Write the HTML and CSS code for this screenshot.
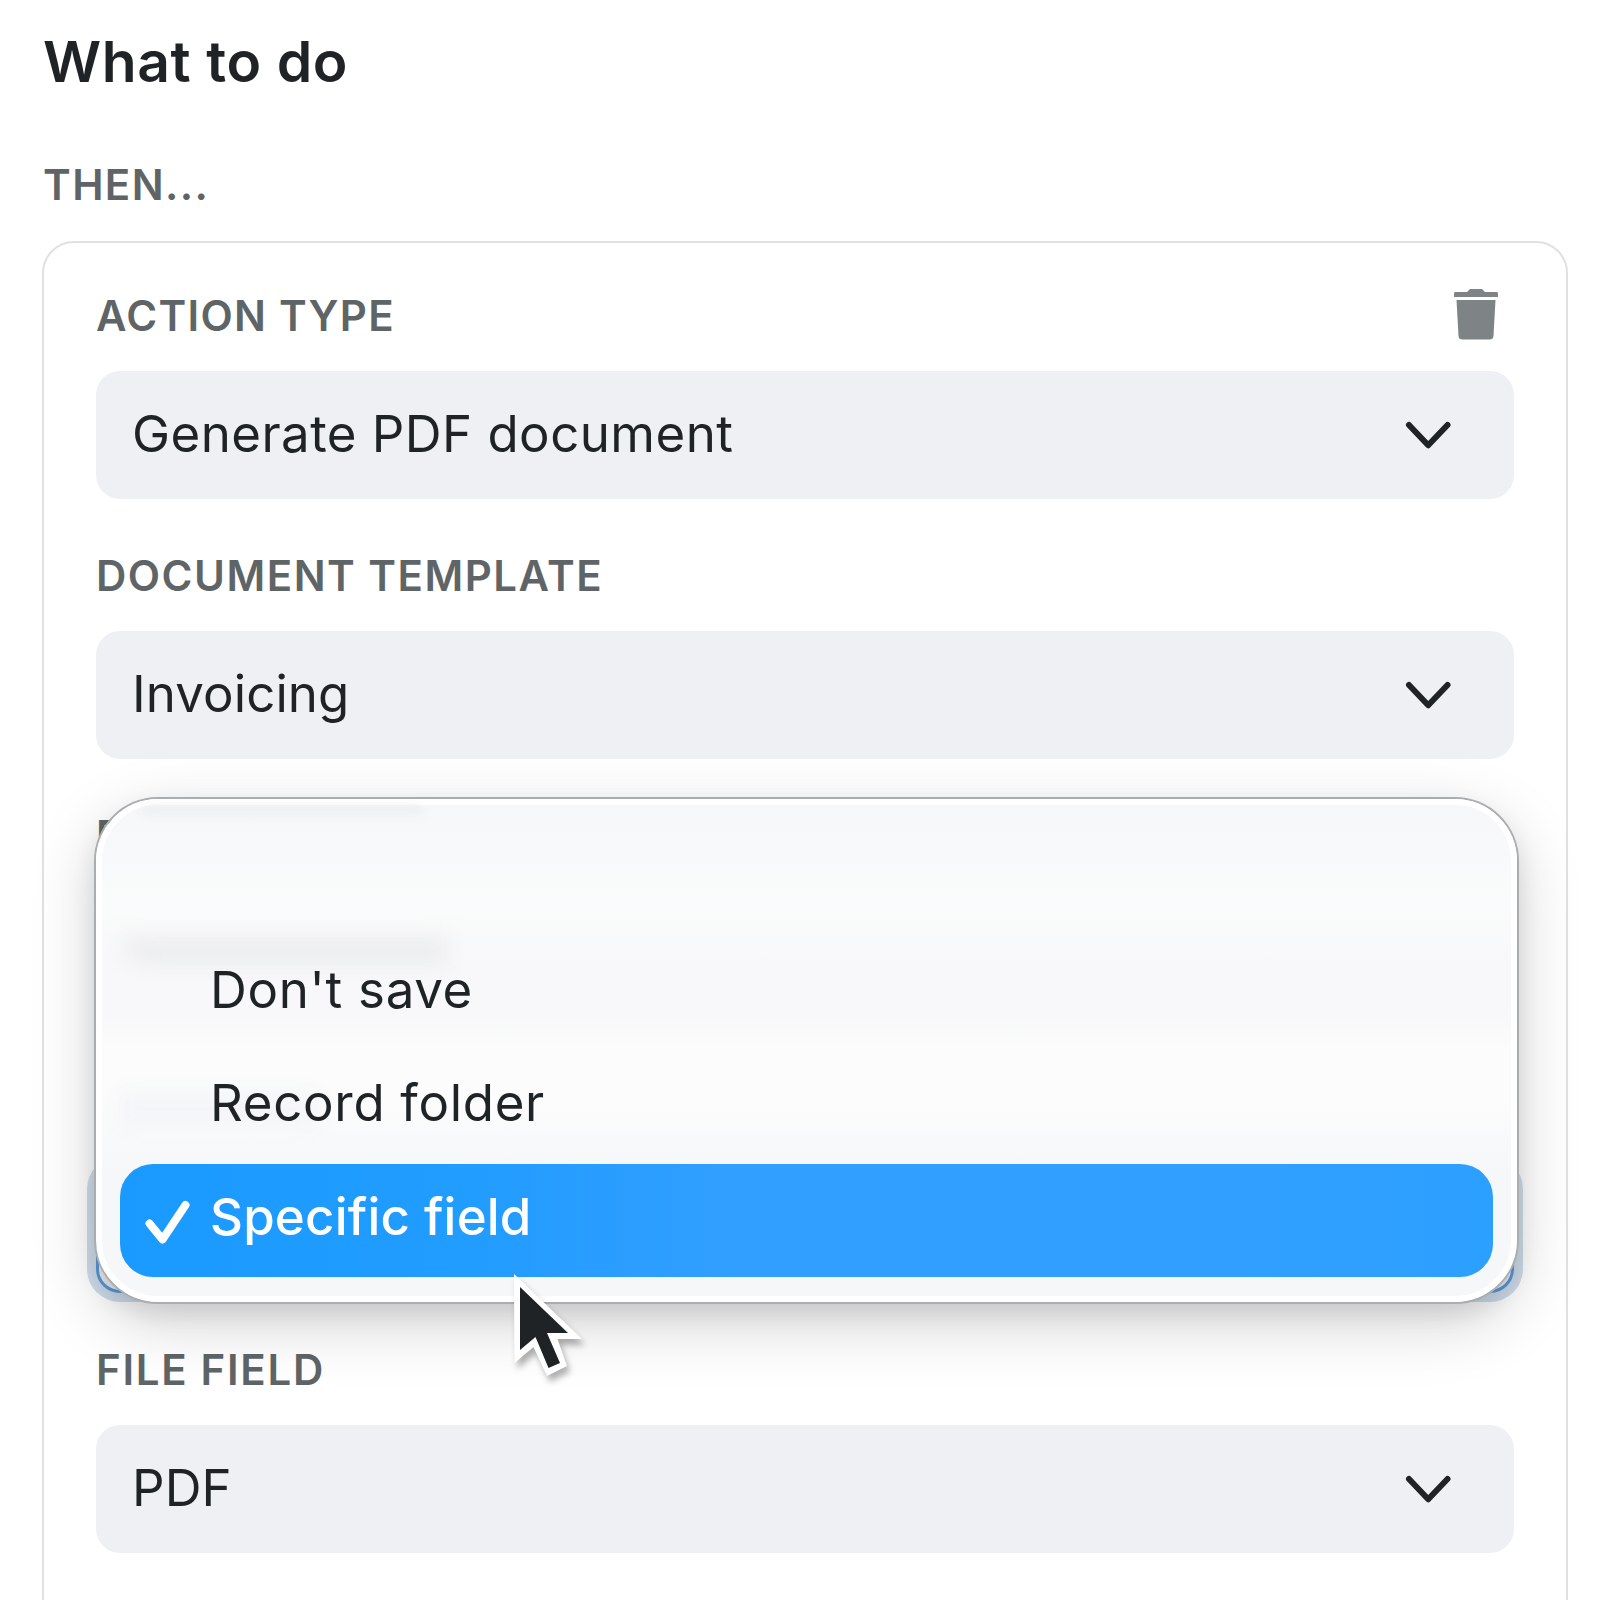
FILE: index.html
```html
<!DOCTYPE html>
<html lang="en">
<head>
<meta charset="utf-8">
<title>What to do</title>
<link rel="stylesheet" href="styles.css">
</head>
<body>
	<div id="wrap">
		<h1>What to do</h1>
		<p class="label then">THEN...</p>
		<div class="card">
			<div class="field">
				<div class="head">
					<p class="label">ACTION TYPE</p>
					<svg class="trash" viewBox="0 0 46 52" width="46" height="52">
						<path d="M1 5q0-1 2-1h11l3-3h12l3 3h11q2 0 2 1v4H1z"/>
						<path d="M3.500 12h39l-2 36q-.4 3.500-4 3.500H9.500q-3.600 0-4-3.500z"/>
					</svg>
				</div>
				<div class="select">
					<span class="value value-long">Generate PDF document</span>
					<svg class="arrow" viewBox="0 0 46 28" width="46" height="28"><path d="M4 4l19.200 20.300L42.500 4"/></svg>
				</div>
			</div>
			<div class="field">
				<p class="label label-template">DOCUMENT TEMPLATE</p>
				<div class="select">
					<span class="value">Invoicing</span>
					<svg class="arrow" viewBox="0 0 46 28" width="46" height="28"><path d="M4 4l19.200 20.300L42.500 4"/></svg>
				</div>
			</div>
			<div class="field covered">
				<p class="label">D</p>
				<div class="select"></div>
			</div>
			<div class="field open">
				<div class="select focus"></div>
				<div class="menu">
					<i class="smear smear-top"></i>
					<i class="smear smear-mid"></i>
					<i class="smear smear-low"></i>
					<ul>
						<li></li>
						<li>Don't save</li>
						<li>Record folder</li>
						<li class="active">
							<svg class="check" viewBox="0 0 46 46" width="46" height="46"><path d="M4.500 23.500L17.500 39.500L40.500 5"/></svg>
							Specific field
						</li>
					</ul>
				</div>
				<svg class="cursor" viewBox="0 0 84 118" width="84" height="118">
					<path class="edge" d="M4 4L72 69H47.500L57 96L37 106L23.500 77L4.500 93z"/>
					<path class="fill" d="M10 17L58 63H37L50 93L38.500 98L25.500 67L10 80z"/>
				</svg>
			</div>
			<div class="field">
				<p class="label label-file">FILE FIELD</p>
				<div class="select">
					<span class="value">PDF</span>
					<svg class="arrow" viewBox="0 0 46 28" width="46" height="28"><path d="M4 4l19.200 20.300L42.500 4"/></svg>
				</div>
			</div>
		</div>
	</div>
</body>
</html>
```
FILE: styles.css
```css
* {box-sizing:border-box;}
body, h1, p, ul {padding:0; margin:0;}
li {list-style:none;}
body {background:#fff; color:#1f2326; font-family:Inter, "Liberation Sans", sans-serif;}

#wrap {height:1600px; padding:30px 32px 0 42px; overflow:hidden;}
h1 {padding-left:1px; line-height:64px; font-size:57px; font-weight:600; letter-spacing:.6px;}

.label {line-height:50px; font-size:42px; font-weight:600; letter-spacing:1.3px; color:#5f6567; white-space:nowrap;}
.label-template {letter-spacing:1.5px;}
.label-file {letter-spacing:1.7px;}
.then {margin-top:66px; padding-left:1px; letter-spacing:1.4px;}

.card {height:1500px; margin-top:31px; padding:48px 52px 0; border:2px solid #dfe1e2; border-radius:32px;}
.field {margin-bottom:52px;}
.head {display:flex; justify-content:space-between;}
.trash {margin:-3px 15px 0 0; fill:#7e8486;}

.select {display:flex; align-items:center; justify-content:space-between; height:128px; margin-top:30px; padding:0 63px 0 36px; border-radius:24px; background:#eff0f4;}
.value {margin-top:-3px; font-size:51px; line-height:60px; letter-spacing:.1px; white-space:nowrap;}
.value-long {letter-spacing:.45px;}
.arrow path {fill:none; stroke:#1f2326; stroke-width:6; stroke-linecap:round; stroke-linejoin:round;}

.covered {margin-bottom:66px;}
.open {position:relative; padding-top:80px;}
.open .select {margin-top:0;}
.focus {border:3px solid #5a9bdc; box-shadow:0 0 0 9px #d0deec;}

.menu {position:absolute; left:0; right:-3px; bottom:-9px; height:503px; padding-top:18px; border-radius:62px; border:6px solid #fff; background:linear-gradient(#f6f7f9, #fafbfb 20%, #f8f8fa 32%, #f8f8fa 42%, #fbfcfb 50%, #fbfcfb 60%, #f6f7f9 75%, #f6f7f9); box-shadow:0 0 0 2px #a9adb0, 0 20px 66px rgba(0,0,0,.18), 0 10px 24px rgba(0,0,0,.1);}
.menu ul {position:relative; padding:0 18px;}
.menu li {height:113.5px; padding-left:90px; line-height:105px; font-size:51px; letter-spacing:.7px; white-space:nowrap;}
.menu .active {position:relative; border-radius:33px; background:linear-gradient(90deg, #1a9aff, #219cff 25%, #319fff 45%, #319fff 80%, #2ca0ff); color:#fff; font-weight:500; letter-spacing:.2px;}
.check {position:absolute; left:25px; top:36px;}
.check path {fill:none; stroke:#fff; stroke-width:8; stroke-linecap:round; stroke-linejoin:round;}

/* what shows through the glass */
.smear {position:absolute; filter:blur(10px);}
.smear-top {left:40px; top:2px; width:280px; height:6px; background:#e9eaec; filter:blur(5px);}
.smear-mid {left:20px; top:132px; width:325px; height:28px; border-radius:0 0 0 30px; background:#ecedee;}
.smear-low {left:16px; top:286px; width:200px; height:36px; background:#f4f5f8;}

.cursor {position:absolute; left:414px; top:185px; filter:drop-shadow(3px 6px 3px rgba(0,0,0,.3));}
.cursor .edge {fill:#fff;}
.cursor .fill {fill:#1f2326;}
```
